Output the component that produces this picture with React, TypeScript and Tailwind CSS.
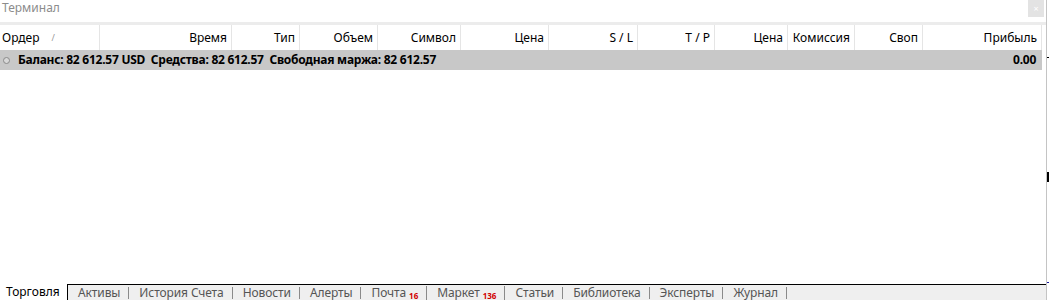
const columns = [
  { label: 'Ордер', width: 'w-[100px]', align: 'justify-start' },
  { label: 'Время', width: 'w-[132px]', align: 'justify-end' },
  { label: 'Тип', width: 'w-[68px]', align: 'justify-end' },
  { label: 'Объем', width: 'w-[78px]', align: 'justify-end' },
  { label: 'Символ', width: 'w-[83px]', align: 'justify-end' },
  { label: 'Цена', width: 'w-[88px]', align: 'justify-end' },
  { label: 'S / L', width: 'w-[89px]', align: 'justify-end' },
  { label: 'T / P', width: 'w-[77px]', align: 'justify-end' },
  { label: 'Цена', width: 'w-[73px]', align: 'justify-end' },
  { label: 'Комиссия', width: 'w-[67px]', align: 'justify-end' },
  { label: 'Своп', width: 'w-[68px]', align: 'justify-end' },
  { label: 'Прибыль', width: 'flex-1', align: 'justify-end' },
]

const tabs: { label: string; badge?: string }[] = [
  { label: 'Активы' },
  { label: 'История Счета' },
  { label: 'Новости' },
  { label: 'Алерты' },
  { label: 'Почта', badge: '16' },
  { label: 'Маркет', badge: '136' },
  { label: 'Статьи' },
  { label: 'Библиотека' },
  { label: 'Эксперты' },
  { label: 'Журнал' },
]

export default function App() {
  return (
    <div
      className="flex h-[300px] w-[1049px] overflow-hidden bg-white text-[12px] text-black"
      style={{ fontFamily: '"Segoe UI", "Noto Sans", "Open Sans", sans-serif' }}
    >
      {/* Main terminal panel */}
      <div className="flex w-[1046px] flex-col">
        {/* Title bar */}
        <div className="flex h-[22px] items-start justify-between">
          <span className="pl-[2px] leading-[15px] text-[#8c8c8c]">Терминал</span>
          <div className="mr-[2px] flex h-[17px] w-[16px] items-center justify-center bg-[#e3e3e3] text-[9px] leading-none text-white">
            ×
          </div>
        </div>
        <div className="h-[3px] bg-[#ececec]" />

        {/* Column headers */}
        <div className="flex h-[25px] pr-[4px]">
          {columns.map((col, i) => (
            <div
              key={i}
              className={`flex ${col.width} ${col.align} items-center border-r border-[#e5e5e5] pl-[2px] pr-[4px]`}
            >
              <span>{col.label}</span>
              {i === 0 && <span className="ml-[12px] text-[9px] text-[#999]">/</span>}
            </div>
          ))}
        </div>

        {/* Balance row */}
        <div className="mr-[4px] flex h-[20px] items-center bg-[#c8c8c8] font-bold">
          <span className="ml-[3px] mr-[8px] flex h-[7px] w-[7px] items-center justify-center rounded-full border border-[#8a8a8a] bg-[#d8d8d8]" />
          <span className="whitespace-pre tracking-[-0.25px]">
            Баланс: 82 612.57 USD  Средства: 82 612.57  Свободная маржа: 82 612.57
          </span>
          <span className="ml-auto pr-[6px] tracking-[-0.25px]">0.00</span>
        </div>

        <div className="flex-1" />

        {/* Bottom tabs */}
        <div className="flex h-[16px] items-stretch">
          <div className="flex w-[67px] items-center pl-[6px] leading-none">Торговля</div>
          <div className="flex flex-1 items-center border-l border-t border-black bg-[#efefef] text-[#555]">
            {tabs.map((tab, i) => (
              <div key={i} className="flex items-center border-r border-[#8a8a8a] pl-[10px] pr-[8px] leading-[12px]">
                <span className="tracking-[-0.1px]">{tab.label}</span>
                {tab.badge && (
                  <span className="ml-[3px] mt-[6px] text-[8px] font-bold leading-none text-[#d00000]">
                    {tab.badge}
                  </span>
                )}
              </div>
            ))}
          </div>
        </div>
      </div>

      {/* Right edge strip */}
      <div className="flex w-[3px] flex-col border-l border-[#c4c4c4]">
        <div className="mt-[57px] h-[1px] w-[3px] bg-black" />
        <div className="mt-[114px] h-[10px] w-[2px] bg-black" />
        <div className="mt-[100px] h-[1px] w-[2px] bg-[#1a1aa0]" />
      </div>
    </div>
  )
}
